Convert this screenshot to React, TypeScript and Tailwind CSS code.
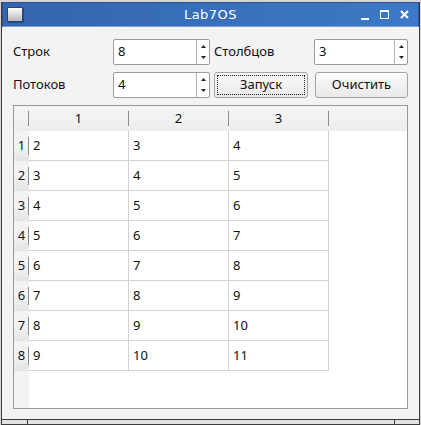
import React from "react";

const FONT = { fontFamily: "'Noto Sans', 'DejaVu Sans', sans-serif" };

const ROWS = [
  [2, 3, 4],
  [3, 4, 5],
  [4, 5, 6],
  [5, 6, 7],
  [6, 7, 8],
  [7, 8, 9],
  [8, 9, 10],
  [9, 10, 11],
];

function SpinBox({ value, width }: { value: string; width: string }) {
  return (
    <div className={`${width} h-[26px] flex bg-white border border-[#9c9c9c] rounded-[2px]`}>
      <div className="flex-1 flex items-center pl-[4px] text-[13px] text-[#111]">{value}</div>
      <div className="w-[13px] border-l border-[#b4b4b4] flex flex-col justify-between items-center py-[5px]">
        <svg width="5" height="3" viewBox="0 0 5 3">
          <path d="M2.5 0 L5 3 L0 3 Z" fill="#222" />
        </svg>
        <svg width="5" height="3" viewBox="0 0 5 3">
          <path d="M0 0 L5 0 L2.5 3 Z" fill="#222" />
        </svg>
      </div>
    </div>
  );
}

function Button({ label, width, focused }: { label: string; width: string; focused?: boolean }) {
  return (
    <div
      className={`${width} h-[26px] p-[2px] bg-linear-to-b from-[#fbfbfb] to-[#e9e9e9] border border-[#a4a4a4] rounded-[3px]`}
    >
      <div
        className={`w-full h-full flex items-center justify-center text-[13px] text-[#111] ${
          focused ? "border border-dotted border-[#222]" : ""
        }`}
      >
        {label}
      </div>
    </div>
  );
}

export default function App() {
  return (
    <div className="w-[421px] h-[425px] bg-[#d6d6d6] pt-[2px] pl-[1px] overflow-hidden" style={FONT}>
      <div className="w-[419px] h-[423px] flex flex-col border-l border-r border-[#3c3c3c] bg-[#f3f3f3]">
        {/* Title bar */}
        <div className="h-[25px] flex items-center bg-linear-to-r from-[#3565ae] to-[#3c79c6] border border-[#2b5191] border-b-[#7ea2d6] px-[4px] relative">
          <div className="w-[16px] h-[15px] border border-[#24467c] rounded-[1px] bg-linear-to-b from-[#ffffff] to-[#b8b8b8] shadow-[1px_1px_0_#254a82]" />
          <div
            className="absolute left-0 right-0 top-0 bottom-0 flex items-center justify-center text-white text-[13px] tracking-[0.5px]"
            style={{ fontFamily: "'DejaVu Sans', sans-serif" }}
          >
            Lab7OS
          </div>
          <div className="ml-auto flex items-center gap-[11px] pr-[5px] relative">
            <div className="w-[8px] h-[2px] bg-white mt-[9px]" />
            <div className="w-[9px] h-[9px] border border-white border-t-2" />
            <svg width="9" height="9" viewBox="0 0 9 9">
              <path d="M1 1 L8 8 M8 1 L1 8" stroke="white" strokeWidth="2" />
            </svg>
          </div>
        </div>

        {/* Body */}
        <div className="flex-1 flex flex-col pt-[12px] pl-[11px] pr-[11px] pb-[10px]">
          <div className="flex items-center h-[26px]">
            <div className="w-[100px] text-[13px] text-[#111]">Строк</div>
            <SpinBox value="8" width="w-[97px]" />
            <div className="w-[104px] pl-[4px] text-[13px] text-[#111]">Столбцов</div>
            <SpinBox value="3" width="w-[94px]" />
          </div>
          <div className="flex items-center h-[26px] mt-[7px]">
            <div className="w-[100px] text-[13px] text-[#111]">Потоков</div>
            <SpinBox value="4" width="w-[97px]" />
            <div className="ml-[4px]">
              <Button label="Запуск" width="w-[94px]" focused />
            </div>
            <div className="ml-[7px]">
              <Button label="Очистить" width="w-[93px]" />
            </div>
          </div>

          {/* Table */}
          <div className="mt-[7px] flex-1 border border-[#9a9a9a] bg-white flex flex-col overflow-hidden">
            <div className="h-[25px] flex bg-linear-to-b from-[#f5f5f5] to-[#ededed] text-[13px] text-[#111]">
              <div className="w-[15px] flex items-center justify-end">
                <div className="w-px h-[15px] bg-[#8c8c8c]" />
              </div>
              {[1, 2, 3].map((c) => (
                <div key={c} className="w-[100px] flex items-center">
                  <div className="flex-1 text-center">{c}</div>
                  <div className="w-px h-[15px] bg-[#8c8c8c]" />
                </div>
              ))}
              <div className="flex-1" />
            </div>
            <div className="flex-1 flex">
              <div className="flex flex-col">
                {ROWS.map((_, i) => (
                  <div
                    key={i}
                    className="w-[15px] h-[30px] flex items-center bg-linear-to-b from-[#f3f3f3] via-[#f3f3f3] to-[#e4e4e4] text-[13px] text-[#111]"
                  >
                    <div className="flex-1 text-center pl-[1px]">{i + 1}</div>
                    <div className="w-px h-[18px] bg-[#8c8c8c]" />
                  </div>
                ))}
                <div className="flex-1 w-[15px] bg-[#f3f3f3]" />
              </div>
              <div className="flex flex-col">
                {ROWS.map((r, i) => (
                  <div key={i} className="flex">
                    {r.map((v, j) => (
                      <div
                        key={j}
                        className="w-[100px] h-[30px] border-r border-b border-[#d2d2d2] flex items-center pl-[4px] text-[13px] text-[#111]"
                      >
                        {v}
                      </div>
                    ))}
                  </div>
                ))}
              </div>
            </div>
          </div>
        </div>

        {/* Bottom frame */}
        <div className="h-[6px] flex border-t border-b border-[#3c3c3c] bg-[#e2e2e2]">
          <div className="w-[26px] border-r border-[#3c3c3c]" />
          <div className="flex-1" />
          <div className="w-[25px] border-l border-[#3c3c3c]" />
        </div>
      </div>
    </div>
  );
}
